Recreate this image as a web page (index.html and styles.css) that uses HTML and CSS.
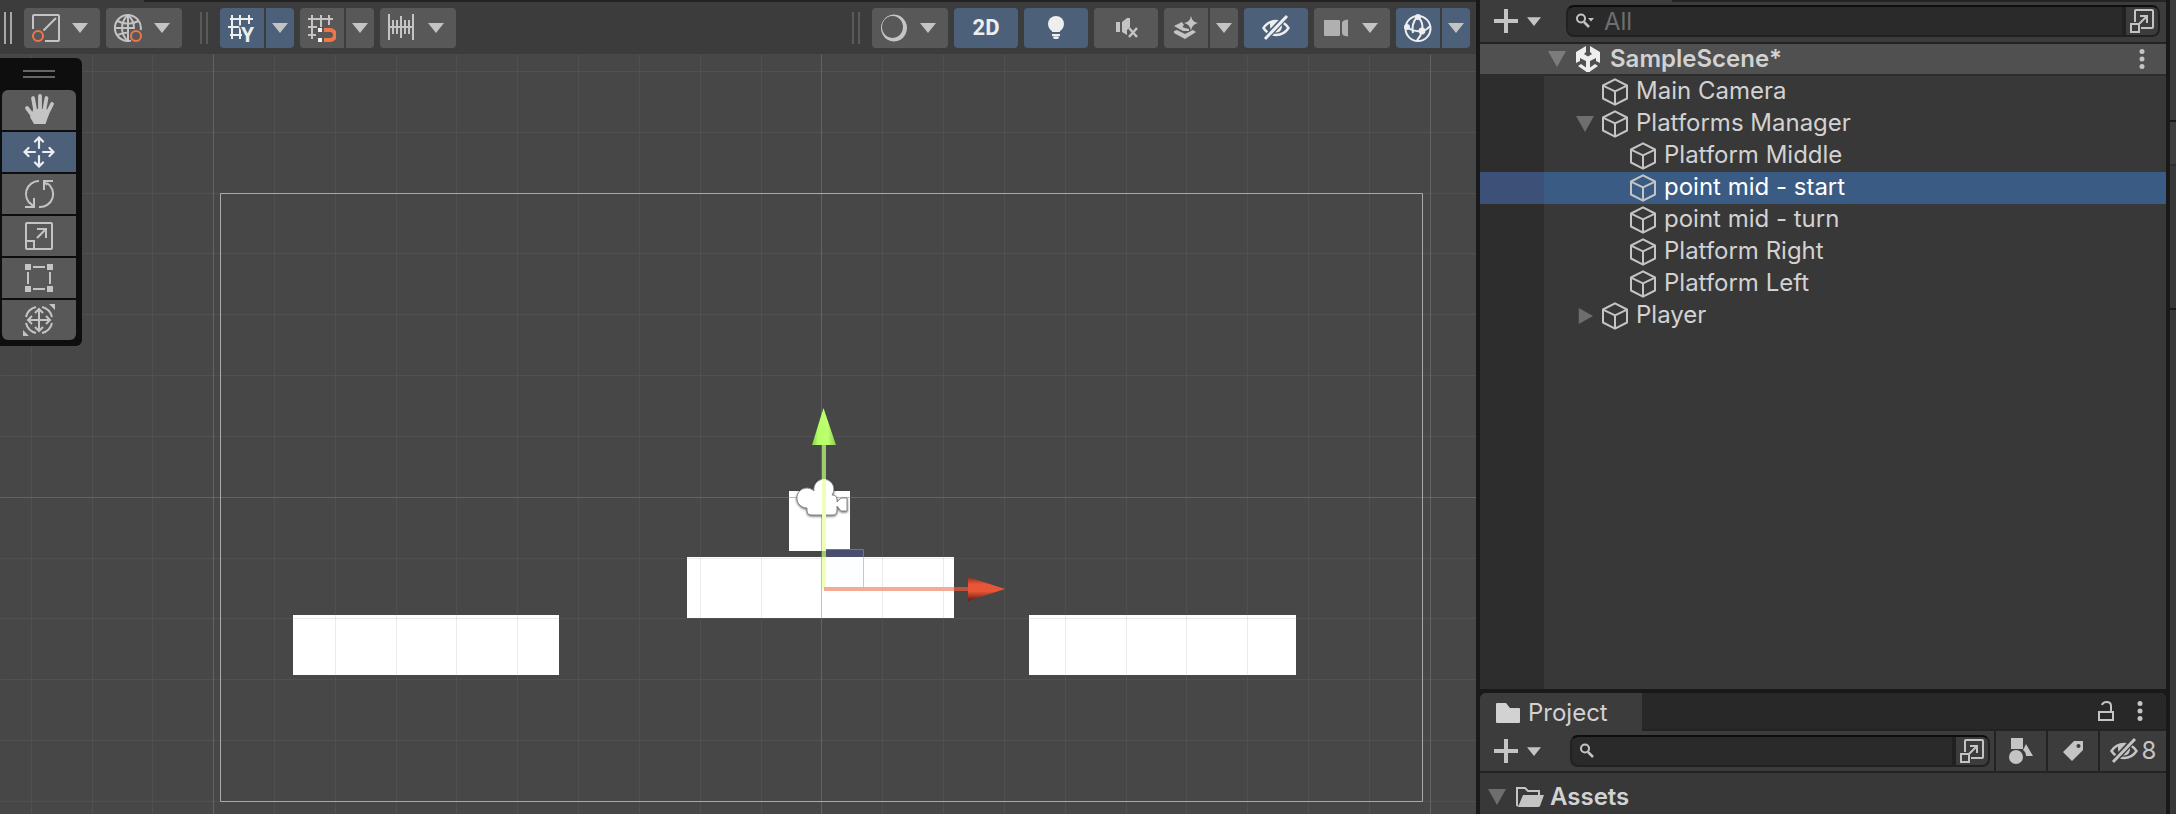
FILE: index.html
```html
<!DOCTYPE html>
<html lang="en">
<head>
<meta charset="utf-8">
<title>Scene editor</title>
<link rel="stylesheet" href="styles.css">
</head>
<body>
<svg class="defs" aria-hidden="true">
  <symbol id="caret" viewBox="0 0 16 10"><path fill="currentColor" d="M0 0H16L8 10Z"/></symbol>
  <symbol id="fold" viewBox="0 0 18 16"><path fill="currentColor" d="M0 0H18L9 16Z"/></symbol>
  <symbol id="unfold" viewBox="0 0 18 18"><path fill="currentColor" d="M2 0V18L18 9Z"/></symbol>
  <symbol id="plus" viewBox="0 0 24 24"><path fill="currentColor" d="M10 0h4v10h10v4H14v10h-4V14H0v-4h10Z"/></symbol>
  <symbol id="dots" viewBox="0 0 6 20"><g fill="currentColor"><circle cx="3" cy="2.5" r="2.5"/><circle cx="3" cy="10" r="2.5"/><circle cx="3" cy="17.5" r="2.5"/></g></symbol>
  <symbol id="cube" viewBox="0 0 26 28"><g fill="none" stroke="currentColor" stroke-width="2" stroke-linejoin="round"><path d="M13 1.3L25 7.5V20.5L13 26.7L1 20.5V7.5Z"/><path d="M1.5 7.8L13 13.3L24.5 7.8M13 13.3V26.5"/></g></symbol>
  <symbol id="pivot" viewBox="0 0 28 28"><g fill="none" stroke="currentColor" stroke-width="2"><path d="M1 15V2Q1 1 2 1H26Q27 1 27 2V26Q27 27 26 27H13M11.500 16.500L24 4"/><circle cx="6" cy="22" r="5" stroke="#f0764a"/></g></symbol>
  <symbol id="globe" viewBox="0 0 28 28"><g fill="none" stroke="currentColor" stroke-width="2"><path d="M17 26.600A13 13 0 1 1 26.700 16"/><path d="M14 27C6 20 6 8 14 1C18.500 5 20.200 10 20 15M14 1V27M3.500 7Q14 12.500 24.500 7M1 14H20M3.500 21Q9 18.500 15 18.500"/><circle cx="22" cy="22" r="5" stroke="#f0764a"/></g></symbol>
  <symbol id="snap" viewBox="0 0 28 28"><path fill="none" stroke="currentColor" stroke-width="2" d="M0 5H25M0 13H9M0 21H8M4 1V25M13 1V11M21 1V11M13 10V13"/><path fill="#f0f0f0" d="M10 14h4v4h-4zM10 24h4v4h-4z"/><path fill="none" stroke="#f0764a" stroke-width="4" d="M16 16H22a5 5 0 0 1 0 10H16"/></symbol>
  <symbol id="ruler" viewBox="0 0 28 28"><path fill="none" stroke="currentColor" stroke-width="2" d="M1 0V26M25 0V26M1 13H25M5 6V20M9 6V20M13 2V24M17 6V20M21 6V20"/></symbol>
  <symbol id="shade" viewBox="0 0 28 28"><path fill="currentColor" fill-rule="evenodd" d="M14 0.500a13 13.500 0 1 0 .01 0ZM12.500 2a10.500 11 0 1 1-.01 0Z"/></symbol>
  <symbol id="bulb" viewBox="0 0 28 28"><g fill="currentColor"><circle cx="14" cy="10" r="8"/><path d="M10 16H18V18H10ZM10 20H18V22Q14 23.500 10 22ZM11 23H17Q17 25 14 25Q11 25 11 23Z"/></g></symbol>
  <symbol id="mute" viewBox="0 0 28 28"><path fill="currentColor" d="M4 8h4v10H4zM10 8L15 4H18V13L15 16V21L10 18Z"/><path fill="none" stroke="currentColor" stroke-width="2.500" d="M17 14L25 23M25 14L17 23"/></symbol>
  <symbol id="effects" viewBox="0 0 28 28"><g fill="currentColor"><path d="M19 2Q20 8 26 9Q20 10 19 17Q18 10 12 9Q18 8 19 2Z"/><path d="M10 8L2 12L11 17H17V15L13 14Q9 13 12 11ZM2 17L5 16L13 20L21 16L24 18L13 25L2 19Z"/></g></symbol>
  <symbol id="eye-off" viewBox="0 0 28 28"><path fill="none" stroke="currentColor" stroke-width="2.400" d="M1.500 14Q6 7 14 7T26.500 14Q22 21 14 21T1.500 14Z"/><path fill="currentColor" d="M8 8.500Q14 6 20 8.500Q21 18.500 14 18.500Q8 18 8 12Z"/><path stroke="var(--cut)" stroke-width="6" d="M3.500 24.500L23.500 3"/><path stroke="currentColor" stroke-width="3" d="M3 25L25 2"/></symbol>
  <symbol id="camera" viewBox="0 0 28 28"><path fill="#b0b0b0" d="M2 6h15q1 0 1 1v14q0 1-1 1H3q-1 0-1-1zM20 9Q20 6 26 5.500V22.500Q20 22 20 19Z"/></symbol>
  <symbol id="gizmo" viewBox="0 0 28 28"><g fill="none" stroke="currentColor" stroke-width="2"><circle cx="14" cy="14.500" r="12.500"/><path d="M14 3Q20 9 18 17Q17 22 13 26.500M13 3Q7 10 9 19M3 13Q9 18 18 17Q23 16 26 12"/></g><g fill="currentColor"><circle cx="14" cy="3" r="3"/><circle cx="3" cy="13" r="3"/><circle cx="18" cy="17" r="3.400"/></g></symbol>
  <symbol id="hand" viewBox="0 0 32 32"><path fill="none" stroke="currentColor" stroke-width="3.800" stroke-linecap="round" d="M4 14L10 22M10 4L12.500 18M17 2V18M23.500 4L21 18M29 10L23 22"/><path fill="currentColor" d="M10.500 15H23.500L26 20L22.500 30H11L7 23Z"/></symbol>
  <symbol id="move" viewBox="0 0 32 32"><path fill="none" stroke="currentColor" stroke-width="2.200" stroke-linecap="round" d="M16 12V2M12 5.500L16 1.500L20 5.500M16 20V30M12 26.500L16 30.500L20 26.500M12 16H2M5.500 12L1.500 16L5.500 20M20 16H30M26.500 12L30.500 16L26.500 20"/></symbol>
  <symbol id="rotate" viewBox="0 0 32 32"><path fill="none" stroke="currentColor" stroke-width="2" d="M16 3A13 13 0 0 0 9 27M16 29A13 13 0 0 0 24 5M21 12V3H30M21 3L24 7M2 29H11V20M11 29L7 25"/></symbol>
  <symbol id="scale" viewBox="0 0 32 32"><path fill="none" stroke="currentColor" stroke-width="2" d="M4 3H28Q29 3 29 4V28Q29 29 28 29H4Q3 29 3 28V4Q3 3 4 3ZM3 21H11V29M14 18L23 9M14 9H23V18"/></symbol>
  <symbol id="rect" viewBox="0 0 32 32"><path fill="currentColor" d="M2 2h6v6H2zM24 2h6v6h-6zM2 24h6v6H2zM24 24h6v6h-6zM10 4h12v2H10zM10 26h12v2H10zM4 10h2v12H4zM26 10h2v12h-2z"/></symbol>
  <symbol id="transform" viewBox="0 0 32 32"><path fill="none" stroke="currentColor" stroke-width="2" d="M16 6V26M6 16H26M12 9L16 5L20 9M12 23L16 27L20 23M9 12L5 16L9 20M23 12L27 16L23 20M3 13A13.500 13.500 0 0 1 13 3M19 3A13.500 13.500 0 0 1 29 13M29 19A13.500 13.500 0 0 1 19 29M13 29A13.500 13.500 0 0 1 3 19"/><path fill="currentColor" d="M26 0H32V6ZM0 26V32H6Z"/></symbol>
  <symbol id="search" viewBox="0 0 20 16"><circle cx="5" cy="5.500" r="4" fill="none" stroke="currentColor" stroke-width="2"/><path stroke="currentColor" stroke-width="2.500" d="M8 9L13 14"/></symbol>
  <symbol id="search-menu" viewBox="0 0 20 16"><circle cx="5" cy="5.500" r="4" fill="none" stroke="currentColor" stroke-width="2"/><path stroke="currentColor" stroke-width="2.500" d="M8 9L13 14"/><path fill="currentColor" d="M12 5H18L15 8.500Z"/></symbol>
  <symbol id="popout" viewBox="0 0 24 24"><path fill="none" stroke="currentColor" stroke-width="2" d="M5 13V2Q5 1 6 1H22Q23 1 23 2V18Q23 19 22 19H11M1 15H9V23H1ZM9 15L17 7M10 7H17V14"/></symbol>
  <symbol id="unity" viewBox="0 0 24 26"><path fill="currentColor" d="M10 0V6L8 8L12 10.500L16 8L14 6V0L24 6V17L20 15V12L14 15V22H10V15L4 12V15L0 17V6ZM2 20L5 18L10 21.500V25.500ZM22 20L19 18L14 21.500V25.500ZM10 22H14V26H10Z"/></symbol>
  <symbol id="folder" viewBox="0 0 24 20"><path fill="currentColor" d="M1 0H10L14 5H23Q24 5 24 6V19Q24 20 23 20H1Q0 20 0 19V1Q0 0 1 0Z"/></symbol>
  <symbol id="folder-open" viewBox="0 0 28 20"><path fill="none" stroke="currentColor" stroke-width="2" d="M2 19L1 18V1H9L12 4H23V8"/><path fill="currentColor" d="M7 8H28L24 19Q23.500 20 22 20H2Z"/></symbol>
  <symbol id="lock" viewBox="0 0 16 20"><path fill="none" stroke="currentColor" stroke-width="2" d="M1 11H15V19H1ZM13 11V5Q13 1 8.500 1Q5 1 4 4"/></symbol>
  <symbol id="types" viewBox="0 0 24 26"><path fill="currentColor" d="M2 0H14V11H2ZM17 6L24 18H17Q17 14 14 12Z"/><circle cx="7" cy="19" r="7" fill="currentColor"/></symbol>
  <symbol id="tag" viewBox="0 0 20 20"><path fill="currentColor" fill-rule="evenodd" d="M11 0H20V9L9 20L0 11ZM15.500 3a2 2 0 1 0 .01 0Z"/></symbol>
</svg>

<div class="editor">
  <main class="scene">
    <div class="toolbar">
      <span class="grip grip-lit"></span>
      <button class="tool menu" aria-label="Tool handle position"><svg class="i28"><use href="#pivot"/></svg><svg class="caret"><use href="#caret"/></svg></button>
      <button class="tool menu" aria-label="Tool handle rotation"><svg class="i28"><use href="#globe"/></svg><svg class="caret"><use href="#caret"/></svg></button>
      <span class="grip grip-mid"></span>
      <div class="split"><button class="tool on" aria-label="Grid visibility"><svg class="i28 open" viewBox="0 0 28 28"><path fill="none" stroke="currentColor" stroke-width="2" d="M2 5H25M0 13H14M2 21H14M4 1V25M12 1V25M21 1V10"/><text x="13" y="28" class="axis">Y</text></svg></button><button class="tool on" aria-label="Grid options"><svg class="caret"><use href="#caret"/></svg></button></div>
      <div class="split"><button class="tool" aria-label="Grid snapping"><svg class="i28"><use href="#snap"/></svg></button><button class="tool" aria-label="Snapping options"><svg class="caret"><use href="#caret"/></svg></button></div>
      <button class="tool menu" aria-label="Snap increment"><svg class="i28"><use href="#ruler"/></svg><svg class="caret"><use href="#caret"/></svg></button>
      <span class="spacer"></span>
      <span class="grip grip-end"></span>
      <button class="tool menu" aria-label="Draw mode"><svg class="i28"><use href="#shade"/></svg><svg class="caret"><use href="#caret"/></svg></button>
      <button class="tool wide on">2D</button>
      <button class="tool wide on" aria-label="Scene lighting"><svg class="i28"><use href="#bulb"/></svg></button>
      <button class="tool wide" aria-label="Audio"><svg class="i28"><use href="#mute"/></svg></button>
      <div class="split"><button class="tool" aria-label="Effects"><svg class="i28"><use href="#effects"/></svg></button><button class="tool" aria-label="Effects options"><svg class="caret"><use href="#caret"/></svg></button></div>
      <button class="tool wide on" aria-label="Hidden objects"><svg class="i28"><use href="#eye-off"/></svg></button>
      <button class="tool menu" aria-label="Camera settings"><svg class="i28"><use href="#camera"/></svg><svg class="caret"><use href="#caret"/></svg></button>
      <div class="split"><button class="tool on" aria-label="Gizmos"><svg class="i28"><use href="#gizmo"/></svg></button><button class="tool on" aria-label="Gizmo options"><svg class="caret"><use href="#caret"/></svg></button></div>
    </div>
    <div class="view">
      <svg class="canvas" viewBox="0 54 1476 760" preserveAspectRatio="xMidYMin slice" role="img" aria-label="Scene view">
        <defs>
          <linearGradient id="gy"><stop offset="0" stop-color="#7dcc4a"/><stop offset=".25" stop-color="#b4ff64"/><stop offset=".65" stop-color="#c0ff70"/><stop offset="1" stop-color="#86cc50"/></linearGradient>
          <linearGradient id="rx" x2="0" y2="1"><stop offset="0" stop-color="#8a2c1a"/><stop offset=".3" stop-color="#e85637"/><stop offset=".6" stop-color="#e85637"/><stop offset="1" stop-color="#5c1c10"/></linearGradient>
        </defs>
        <g fill="#fff"><path d="M293 615H559V675H293ZM687 557H954V618H687ZM1029 615H1296V675H1029ZM789 491H850V551H789Z"/></g>
        <g class="lines" transform="translate(.5 .5)">
          <path class="minor" d="M31 54V814M92 54V814M152 54V814M274 54V814M335 54V814M396 54V814M456 54V814M517 54V814M578 54V814M639 54V814M700 54V814M761 54V814M882 54V814M943 54V814M1004 54V814M1065 54V814M1126 54V814M1186 54V814M1247 54V814M1308 54V814M1369 54V814"/>
          <path class="minor" d="M0 71H1476M0 132H1476M0 193H1476M0 253H1476M0 314H1476M0 375H1476M0 436H1476M0 558H1476M0 618H1476M0 679H1476M0 740H1476M0 801H1476"/>
          <path class="major" d="M213 54V814M821 54V814M1430 54V814M0 497H1476"/>
          <path class="frame" d="M220 193H1422V801H220Z"/>
        </g>
        <g class="cam"><path d="M807 508A10 10 0 1 1 814 491A10 10 0 1 1 832 495Q837 495 837 500V502L841 498H847V511H841L837 506V510Q837 515 833 515H811Q807 515 807 511Z"/></g>
        <path fill="#494d6f" d="M825 549H864V557H825Z"/><path fill="#fcfeff" d="M825 557H864V589H825Z"/>
        <path fill="none" stroke="#5577cc" d="M825 549.500H863.500V557"/><path fill="none" stroke="#a9cff5" d="M863.500 557V588.500H825"/>
        <path fill="#9dcc6a" d="M822 445H826V479H822ZM822 551H826V557H822Z"/>
        <path fill="#f0ffb8" d="M822 479H826V551H822ZM822 557H826V589H822Z"/>
        <path fill="url(#gy)" d="M823.500 408L836 445H812Z"/>
        <path fill="#f3ab98" d="M824 587H954V591H824Z"/><path fill="#bd523c" d="M954 587H968V591H954Z"/>
        <path fill="url(#rx)" d="M1005 589L968 577V601Z"/>
      </svg>
      <div class="palette">
        <span class="grab"></span>
        <button class="tool" aria-label="Hand tool"><svg class="i32"><use href="#hand"/></svg></button>
        <button class="tool on" aria-label="Move tool"><svg class="i32"><use href="#move"/></svg></button>
        <button class="tool" aria-label="Rotate tool"><svg class="i32"><use href="#rotate"/></svg></button>
        <button class="tool" aria-label="Scale tool"><svg class="i32"><use href="#scale"/></svg></button>
        <button class="tool" aria-label="Rect tool"><svg class="i32"><use href="#rect"/></svg></button>
        <button class="tool" aria-label="Transform tool"><svg class="i32"><use href="#transform"/></svg></button>
      </div>
    </div>
  </main>

  <aside class="side">
    <section class="hierarchy">
      <div class="bar bar-top">
        <button class="add" aria-label="Create object"><svg class="i24"><use href="#plus"/></svg><svg class="caret-s"><use href="#caret"/></svg></button>
        <div class="search">
          <svg class="glass"><use href="#search-menu"/></svg>
          <input type="text" placeholder="All" aria-label="Search hierarchy">
          <button class="pop" aria-label="Open search window"><svg class="i24"><use href="#popout"/></svg></button>
        </div>
      </div>
      <div class="root">
        <button class="root-name"><svg class="fold"><use href="#fold"/></svg><svg class="unity"><use href="#unity"/></svg>SampleScene*</button>
        <button class="more" aria-label="Scene menu"><svg class="dots"><use href="#dots"/></svg></button>
      </div>
      <ul class="tree">
        <li><button class="node"><span class="fold"></span><svg class="cube"><use href="#cube"/></svg><span class="name">Main Camera</span></button></li>
        <li><button class="node"><svg class="fold"><use href="#fold"/></svg><svg class="cube"><use href="#cube"/></svg><span class="name">Platforms Manager</span></button></li>
        <li><button class="node child"><span class="fold"></span><svg class="cube"><use href="#cube"/></svg><span class="name">Platform Middle</span></button></li>
        <li class="selected"><button class="node child"><span class="fold"></span><svg class="cube"><use href="#cube"/></svg><span class="name">point mid - start</span></button></li>
        <li><button class="node child"><span class="fold"></span><svg class="cube"><use href="#cube"/></svg><span class="name">point mid - turn</span></button></li>
        <li><button class="node child"><span class="fold"></span><svg class="cube"><use href="#cube"/></svg><span class="name">Platform Right</span></button></li>
        <li><button class="node child"><span class="fold"></span><svg class="cube"><use href="#cube"/></svg><span class="name">Platform Left</span></button></li>
        <li><button class="node"><svg class="fold"><use href="#unfold"/></svg><svg class="cube"><use href="#cube"/></svg><span class="name">Player</span></button></li>
      </ul>
    </section>
    <section class="project">
      <div class="tabs">
        <button class="tab"><svg class="folder"><use href="#folder"/></svg>Project</button>
        <span class="tab-fill"><button class="plain" aria-label="Lock"><svg class="lock"><use href="#lock"/></svg></button><button class="plain" aria-label="Panel menu"><svg class="dots"><use href="#dots"/></svg></button></span>
      </div>
      <div class="bar bar-project">
        <button class="add" aria-label="Create asset"><svg class="i24"><use href="#plus"/></svg><svg class="caret-s"><use href="#caret"/></svg></button>
        <div class="search">
          <svg class="glass"><use href="#search"/></svg>
          <input type="text" aria-label="Search project">
          <button class="pop" aria-label="Open search window"><svg class="i24"><use href="#popout"/></svg></button>
        </div>
        <button class="filter" aria-label="Search by type"><svg class="types"><use href="#types"/></svg></button>
        <button class="filter" aria-label="Search by label"><svg class="tag"><use href="#tag"/></svg></button>
        <button class="filter hidden-count"><svg class="i28"><use href="#eye-off"/></svg>8</button>
      </div>
      <div class="assets"><button class="asset"><svg class="fold"><use href="#fold"/></svg><svg class="folder-open"><use href="#folder-open"/></svg>Assets</button></div>
    </section>
  </aside>
  <div class="strip"><span class="s-head"></span><span class="s-tab"></span><span class="s-body"></span><span class="s-rest"></span></div>
</div>
</body>
</html>
```

FILE: styles.css
```css
* { box-sizing: border-box; }
body {
  margin: 0;
  background: #191919;
  color: #d2d2d2;
  font: 24px/32px Inter, "Liberation Sans", sans-serif;
}
button {
  margin: 0;
  padding: 0;
  border: 0;
  background: none;
  color: #c4c4c4;
  font: inherit;
  display: flex;
  align-items: center;
}
svg { display: block; flex: none; }
.defs { position: absolute; width: 0; height: 0; }
.open { overflow: visible; }
.editor {
  display: grid;
  grid-template-columns: minmax(0, 1fr) 686px 6px;
  column-gap: 4px;
  height: 100vh;
  overflow: hidden;
}

.i24 { width: 24px; height: 24px; }
.i28 { width: 28px; height: 28px; }
.i32 { width: 32px; height: 32px; }
.caret { width: 16px; height: 10px; }
.caret-s { width: 14px; height: 9px; }
.fold { width: 18px; height: 16px; color: #6e6e6e; flex: none; }
.dots { width: 6px; height: 20px; }

/* Scene */
.scene { display: flex; flex-direction: column; min-width: 0; }
.toolbar {
  display: flex;
  align-items: center;
  gap: 6px;
  height: 54px;
  padding: 2px 6px 0 4px;
  background: linear-gradient(#232323, #232323) 144px 0 / 100% 2px no-repeat #3c3c3c;
}
.grip {
  width: 8px;
  height: 32px;
  border: solid #5a5a5a;
  border-width: 0 2px;
}
.grip-lit { border-color: #a8a8a8; margin-right: 6px; }
.grip-mid { margin: 0 6px 0 12px; }
.grip-end { margin-right: 6px; }
.spacer { flex: 1; }
.tool {
  --cut: #4c607a;
  height: 40px;
  justify-content: center;
  border-radius: 4px;
  background: #585858;
}
.tool.on { background: #4c607a; color: #eee; }
.tool.on .caret { color: #c4c4c4; }
.tool.menu { width: 76px; padding: 0 12px 0 8px; justify-content: space-between; }
.tool.wide { width: 64px; font: 700 22px/40px Roboto, sans-serif; }
.split { display: flex; gap: 2px; }
.split .tool:first-child { width: 44px; border-radius: 4px 0 0 4px; }
.split .tool:last-child { width: 28px; border-radius: 0 4px 4px 0; }
.axis {
  font: 700 21px Roboto, sans-serif;
  fill: currentColor;
  stroke: #4c607a;
  stroke-width: 3px;
  paint-order: stroke;
}
.view { position: relative; flex: 1; min-height: 0; background: #474747; }
.canvas { width: 100%; height: 100%; }
.lines { fill: none; }
.minor { stroke: rgba(128, 128, 128, .16); }
.major { stroke: rgba(128, 128, 128, .5); }
.frame { stroke: #aaa; }
.cam { fill: #fff; stroke: #8a8a8a; stroke-width: 1px; filter: drop-shadow(0 1px 1px rgba(0, 0, 0, .6)); }
.palette {
  position: absolute;
  top: 4px;
  left: 0;
  display: flex;
  flex-direction: column;
  gap: 2px;
  padding: 12px 6px 6px 2px;
  border-radius: 0 6px 6px 0;
  background: #0e0e0e;
}
.palette .tool { width: 74px; border-radius: 0; }
.palette .tool:nth-child(2) { border-radius: 6px 6px 0 0; }
.palette .tool:last-child { border-radius: 0 0 6px 6px; }
.grab {
  width: 32px;
  height: 8px;
  margin: 0 auto 10px;
  border: solid #666;
  border-width: 2px 0;
}

/* Side panels */
.side { display: flex; flex-direction: column; gap: 4px; min-width: 0; }
.bar { display: flex; align-items: center; background: #3c3c3c; }
.bar-top {
  height: 44px;
  padding: 2px 6px 2px 14px;
  background: linear-gradient(#232323, #232323) 192px 0 / 100% 2px no-repeat #3c3c3c;
  border-bottom: 2px solid #232323;
}
.add { gap: 9px; margin-right: 25px; }
.search {
  flex: 1;
  display: flex;
  align-items: center;
  height: 32px;
  min-width: 0;
  border: 2px solid #212121;
  border-top-color: #0d0d0d;
  border-radius: 8px;
  background: #2a2a2a;
  overflow: hidden;
}
.glass { width: 20px; height: 16px; margin-left: 8px; color: #c4c4c4; }
.search input {
  flex: 1;
  min-width: 0;
  height: 28px;
  padding: 2px 0 0 8px;
  border: 0;
  outline: 0;
  background: none;
  color: #d2d2d2;
  font: inherit;
}
.search input::placeholder { color: #6e6e6e; opacity: 1; }
.pop {
  height: 28px;
  padding: 0 4px;
  border-left: 4px solid #212121;
  background: #3c3c3c;
}
.hierarchy { flex: 1; display: flex; flex-direction: column; min-height: 0; background: #383838; }
.root {
  display: flex;
  justify-content: space-between;
  height: 32px;
  padding: 0 21px 0 68px;
  background: #505050;
  border-bottom: 2px solid #2d2d2d;
}
.root-name { font-weight: 600; color: #d2d2d2; line-height: 28px; }
.root .fold { color: #7c7c7c; }
.unity { width: 24px; height: 26px; margin: 0 10px; color: #eee; }
.tree {
  flex: 1;
  margin: 0;
  padding: 0;
  list-style: none;
  background: linear-gradient(90deg, #2d2d2d 64px, #383838 64px);
}
.selected { background: linear-gradient(90deg, #3c5078 64px, #3a5c84 64px); }
.node { width: 100%; height: 32px; padding-left: 96px; color: #d2d2d2; }
.node.child { padding-left: 124px; }
.name { padding-bottom: 2px; line-height: 30px; }
.selected .node { color: #fff; }
.cube { width: 26px; height: 28px; margin: 0 8px; color: #c4c4c4; }

.project { background: #383838; height: 121px; overflow: hidden; border-radius: 6px 6px 0 0; }
.tabs { display: flex; height: 38px; background: #3c3c3c; }
.tab { width: 162px; padding: 2px 0 0 16px; gap: 8px; color: #d2d2d2; border-radius: 6px 6px 0 0; }
.tab-fill {
  flex: 1;
  display: flex;
  justify-content: flex-end;
  align-items: center;
  gap: 23px;
  padding-right: 23px;
  background: #282828;
  border-bottom: 2px solid #232323;
}
.folder { width: 24px; height: 20px; }
.lock { width: 16px; height: 20px; }
.bar-project { height: 42px; padding-left: 14px; border-bottom: 2px solid #232323; }
.bar-project .add { margin-right: 29px; }
.bar-project .search { margin-right: 4px; }
.filter {
  --cut: #3c3c3c;
  width: 52px;
  height: 40px;
  justify-content: center;
  border-left: 2px solid #232323;
}
.types { width: 24px; height: 26px; }
.tag { width: 20px; height: 20px; }
.hidden-count { width: 68px; gap: 4px; }
.assets { padding-top: 8px; }
.asset { padding-left: 8px; font-weight: 600; color: #d2d2d2; }
.folder-open { width: 28px; height: 20px; margin: 0 6px 0 10px; color: #c4c4c4; }

/* Neighbouring panel edge */
.strip { display: flex; flex-direction: column; }
.strip span { background: #383838; }
.strip .s-head { height: 120px; background: #3c3c3c; }
.strip .s-tab { height: 44px; margin-top: 2px; background: #3e3e3e; border-bottom: 2px solid #303030; }
.strip .s-body { height: 142px; }
.strip .s-rest { flex: 1; margin-top: 2px; }
```
